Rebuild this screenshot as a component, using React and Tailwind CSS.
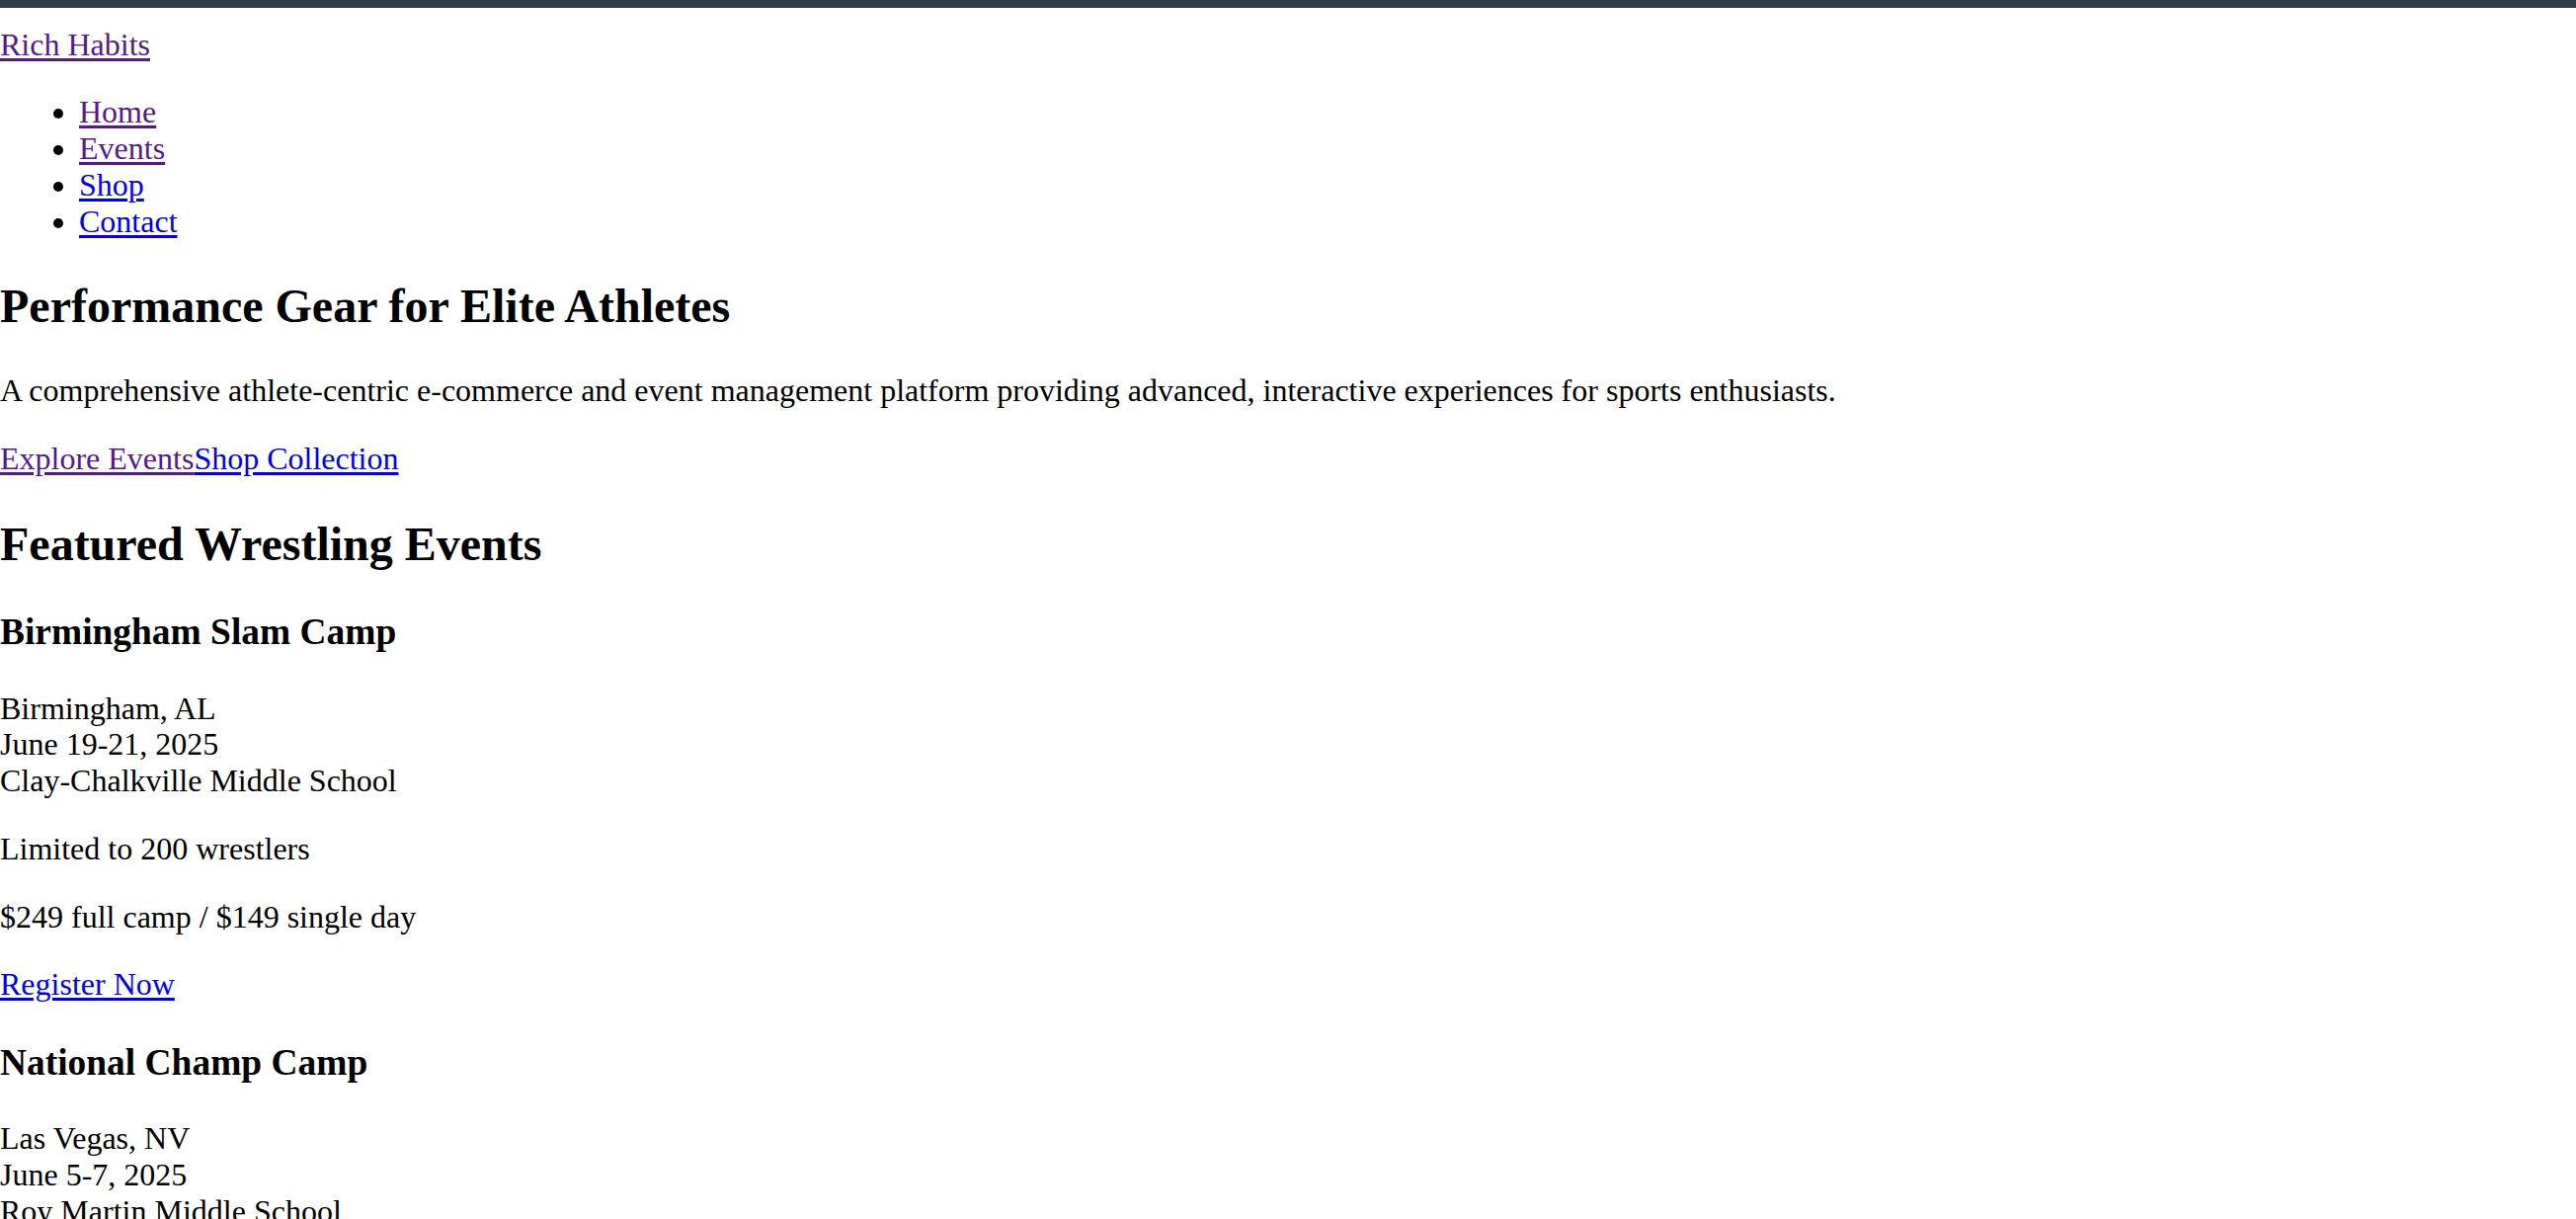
const visited = 'text-[#551a8b] underline underline-offset-[3px]'
const link = 'text-[#0000ee] underline underline-offset-[3px]'

const events = [
  {
    name: 'Birmingham Slam Camp',
    city: 'Birmingham, AL',
    dates: 'June 19-21, 2025',
    venue: 'Clay-Chalkville Middle School',
    limit: 'Limited to 200 wrestlers',
    price: '$249 full camp / $149 single day',
  },
  {
    name: 'National Champ Camp',
    city: 'Las Vegas, NV',
    dates: 'June 5-7, 2025',
    venue: 'Roy Martin Middle School',
    limit: 'Limited to 200 wrestlers',
    price: '$249 full camp / $149 single day',
  },
]

export default function App() {
  return (
    <div className="min-h-screen bg-white text-black text-[32px] leading-[1.149] font-['Liberation_Serif','Times_New_Roman',serif]">
      {/* dark strip across the top */}
      <div className="h-[8px] bg-[#2f3e4b] border-b-2 border-[#3b3f44]" />

      <header className="pt-[18.5px]">
        <a href="#" className={visited}>Rich Habits</a>
        <ul className="my-[32px] pl-[80px] list-disc">
          <li><a href="#" className={visited}>Home</a></li>
          <li><a href="#" className={visited}>Events</a></li>
          <li><a href="#" className={link}>Shop</a></li>
          <li><a href="#" className={link}>Contact</a></li>
        </ul>
      </header>

      <section className="mt-[40px]">
        <h1 className="text-[48px] font-bold leading-[1.149]">Performance Gear for Elite Athletes</h1>
        <p className="mt-[40px] mb-[32px]">
          A comprehensive athlete-centric e-commerce and event management platform providing advanced, interactive experiences for sports enthusiasts.
        </p>
        <div>
          <a href="#" className={visited}>Explore Events</a>
          <a href="#" className={link}>Shop Collection</a>
        </div>
      </section>

      <section className="mt-[40px]">
        <h2 className="text-[48px] font-bold leading-[1.149]">Featured Wrestling Events</h2>
        {events.map((ev, i) => (
          <div key={ev.name} className={i === 0 ? 'flex flex-col gap-[32px] pt-[40px]' : 'flex flex-col gap-[32px] pt-[38.5px]'}>
            <h3 className="text-[37.44px] font-bold leading-[1.149] mb-[5.5px]">{ev.name}</h3>
            <p>
              {ev.city}<br />
              {ev.dates}<br />
              {ev.venue}
            </p>
            <p>{ev.limit}</p>
            <p>{ev.price}</p>
            <p><a href="#" className={link}>Register Now</a></p>
          </div>
        ))}
      </section>
    </div>
  )
}
